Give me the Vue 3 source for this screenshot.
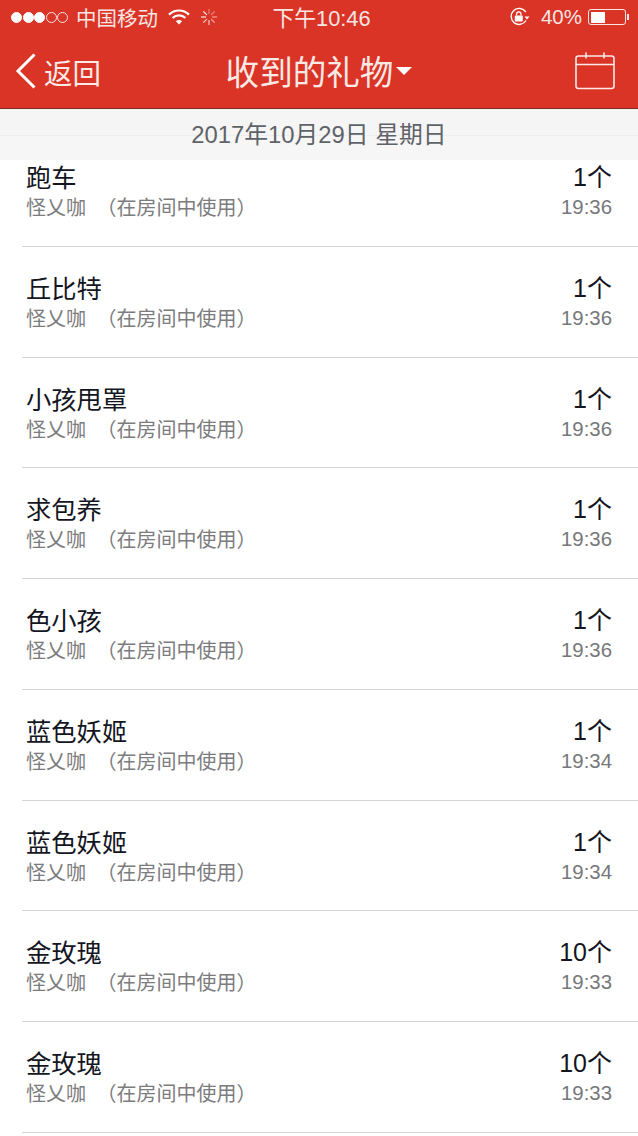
<script setup>
const rows = [
  ['跑车', '1个', '19:36'],
  ['丘比特', '1个', '19:36'],
  ['小孩甩罩', '1个', '19:36'],
  ['求包养', '1个', '19:36'],
  ['色小孩', '1个', '19:36'],
  ['蓝色妖姬', '1个', '19:34'],
  ['蓝色妖姬', '1个', '19:34'],
  ['金玫瑰', '10个', '19:33'],
  ['金玫瑰', '10个', '19:33'],
]
const rays = [0, 45, 90, 135, 180, 225, 270, 315]
</script>

<template>
  <div class="page">
    <header class="top">
      <div class="status">
        <div class="status-left">
          <span class="signal">
            <i class="dot on"></i><i class="dot on"></i><i class="dot on"></i><i class="dot"></i><i class="dot"></i>
          </span>
          <span class="carrier">中国移动</span>
          <svg class="wifi" width="22" height="16" viewBox="0 0 22 16">
            <path d="M1 5.6a14.2 14.2 0 0 1 20 0" fill="none" stroke="#fff" stroke-width="2.2" />
            <path d="M4.6 9a9.2 9.2 0 0 1 12.8 0" fill="none" stroke="#fff" stroke-width="2.2" />
            <path d="M11 15.4 7.9 12.2a4.4 4.4 0 0 1 6.2 0z" fill="#fff" />
          </svg>
          <svg class="spin" width="18" height="18" viewBox="0 0 18 18">
            <line v-for="(r, i) in rays" :key="r" x1="9" y1="1" x2="9" y2="6" stroke="#fff" stroke-width="1.3" :stroke-opacity="0.35 + i * 0.08" :transform="`rotate(${r} 9 9)`" />
          </svg>
        </div>
        <div class="clock">下午10:46</div>
        <div class="status-right">
          <svg class="lock" width="21" height="20" viewBox="0 0 21 20">
            <path d="M17 13.5A8 8 0 1 1 16.8 5" fill="none" stroke="#fff" stroke-width="1.4" />
            <path d="M20.5 9.5h-5l2.5 3z" fill="#fff" />
            <rect x="5.8" y="8.6" width="8" height="6" rx="1" fill="#fff" />
            <path d="M7.6 8.6V7a2.2 2.2 0 0 1 4.4 0v1.6" fill="none" stroke="#fff" stroke-width="1.2" />
          </svg>
          <span class="pct">40%</span>
          <span class="battery"><span class="level"></span></span>
          <span class="nub"></span>
        </div>
      </div>
      <div class="nav">
        <div class="back">
          <svg width="22" height="38" viewBox="0 0 22 38">
            <path d="M19.5 2.5 3 19l16.5 16.5" fill="none" stroke="#fff" stroke-width="3" />
          </svg>
          <span>返回</span>
        </div>
        <div class="title">收到的礼物<span class="caret"></span></div>
        <svg class="cal" width="40" height="38" viewBox="0 0 40 38">
          <rect x="1" y="4" width="38" height="32.5" rx="2.5" fill="none" stroke="#fbe9e6" stroke-width="1.6" />
          <path d="M1 12.5h38M11 0.5v6M29 0.5v6" fill="none" stroke="#fbe9e6" stroke-width="1.6" />
        </svg>
      </div>
    </header>
    <div class="date"><span>2017年10月29日 星期日</span></div>
    <div class="viewport">
      <ul class="list">
        <li v-for="(row, i) in rows" :key="i" class="row">
          <div class="line head">
            <span class="name">{{ row[0] }}</span>
            <span class="count">{{ row[1] }}</span>
          </div>
          <div class="line sub">
            <span class="who">怪乂咖 （在房间中使用）</span>
            <span class="time">{{ row[2] }}</span>
          </div>
        </li>
      </ul>
    </div>
  </div>
</template>

<style>
html, body { margin: 0; background: #fff; overflow: hidden; }
</style>

<style scoped>
.page {
  width: 638px;
  height: 1136px;
  display: flex;
  flex-direction: column;
  overflow: hidden;
  font-family: "Liberation Sans", "Noto Sans CJK SC", sans-serif;
  background: #fff;
}
.top {
  height: 108px;
  flex: none;
  background: #da3427;
  border-bottom: 1px solid #7d2a22;
  color: #fff;
}
.status {
  height: 34px;
  display: grid;
  grid-template-columns: 1fr auto 1fr;
  align-items: center;
  color: #f8e6e3;
}
.status-left { display: flex; align-items: center; padding-left: 11px; }
.signal { display: flex; gap: 0.5px; }
.dot { width: 11px; height: 11px; border-radius: 50%; border: 1px solid #f8e6e3; box-sizing: border-box; }
.dot.on { background: #fff; border-color: #fff; }
.carrier { margin-left: 8px; font-size: 20.5px; }
.wifi { margin-left: 10px; }
.spin { margin-left: 10px; }
.clock { font-size: 21.8px; margin: 0 0 2px 5px; }
.status-right { display: flex; align-items: center; justify-content: flex-end; padding-right: 9px; }
.pct { margin-left: 11px; font-size: 20.5px; margin-right: 6px; }
.battery {
  width: 38px;
  height: 16px;
  padding: 1.5px;
  box-sizing: border-box;
  border: 1px solid #f8e6e3;
  border-radius: 3px;
  display: flex;
}
.level { width: 14px; background: #fff; }
.nub { width: 2px; height: 6px; background: #f8e6e3; margin-left: 1px; }
.nav {
  height: 74px;
  display: grid;
  grid-template-columns: 1fr auto 1fr;
  align-items: center;
}
.back { display: flex; align-items: center; gap: 7px; padding-left: 15px; font-size: 28.5px; color: #fbe9e6; }
.title { font-size: 33.6px; color: #fbe9e6; display: flex; align-items: center; padding-bottom: 1px; }
.caret {
  width: 0;
  height: 0;
  border-left: 8px solid transparent;
  border-right: 8px solid transparent;
  border-top: 8px solid #fff;
  margin-left: 3px;
}
.cal { justify-self: end; margin-right: 23px; }
.date {
  height: 51px;
  flex: none;
  box-sizing: border-box;
  padding-bottom: 4px;
  background: linear-gradient(#f5f5f5 0 26px, #eeeeee 26px 27px, #f6f6f6 27px);
  color: #5f6368;
  font-size: 23.8px;
  display: flex;
  align-items: center;
  justify-content: center;
}
.viewport { flex: 1; overflow: hidden; }
.list { list-style: none; margin: -24px 0 0; padding: 0 0 0 22px; }
.row {
  height: 110.75px;
  box-sizing: border-box;
  border-bottom: 1px solid #d4d4d6;
  padding: 26px 26px 0 4px;
}
.line { display: flex; justify-content: space-between; }
.head { height: 32px; align-items: flex-start; }
.name { font-size: 25.3px; line-height: 32px; color: #14161f; }
.count { font-size: 25px; line-height: 30px; color: #14161f; }
.sub { height: 26px; align-items: flex-start; margin-top: 1px; font-size: 20px; line-height: 26px; color: #7c7c7e; }
.who { word-spacing: 5px; }
.time { font-size: 20.4px; line-height: 24px; color: #77777a; }
</style>
